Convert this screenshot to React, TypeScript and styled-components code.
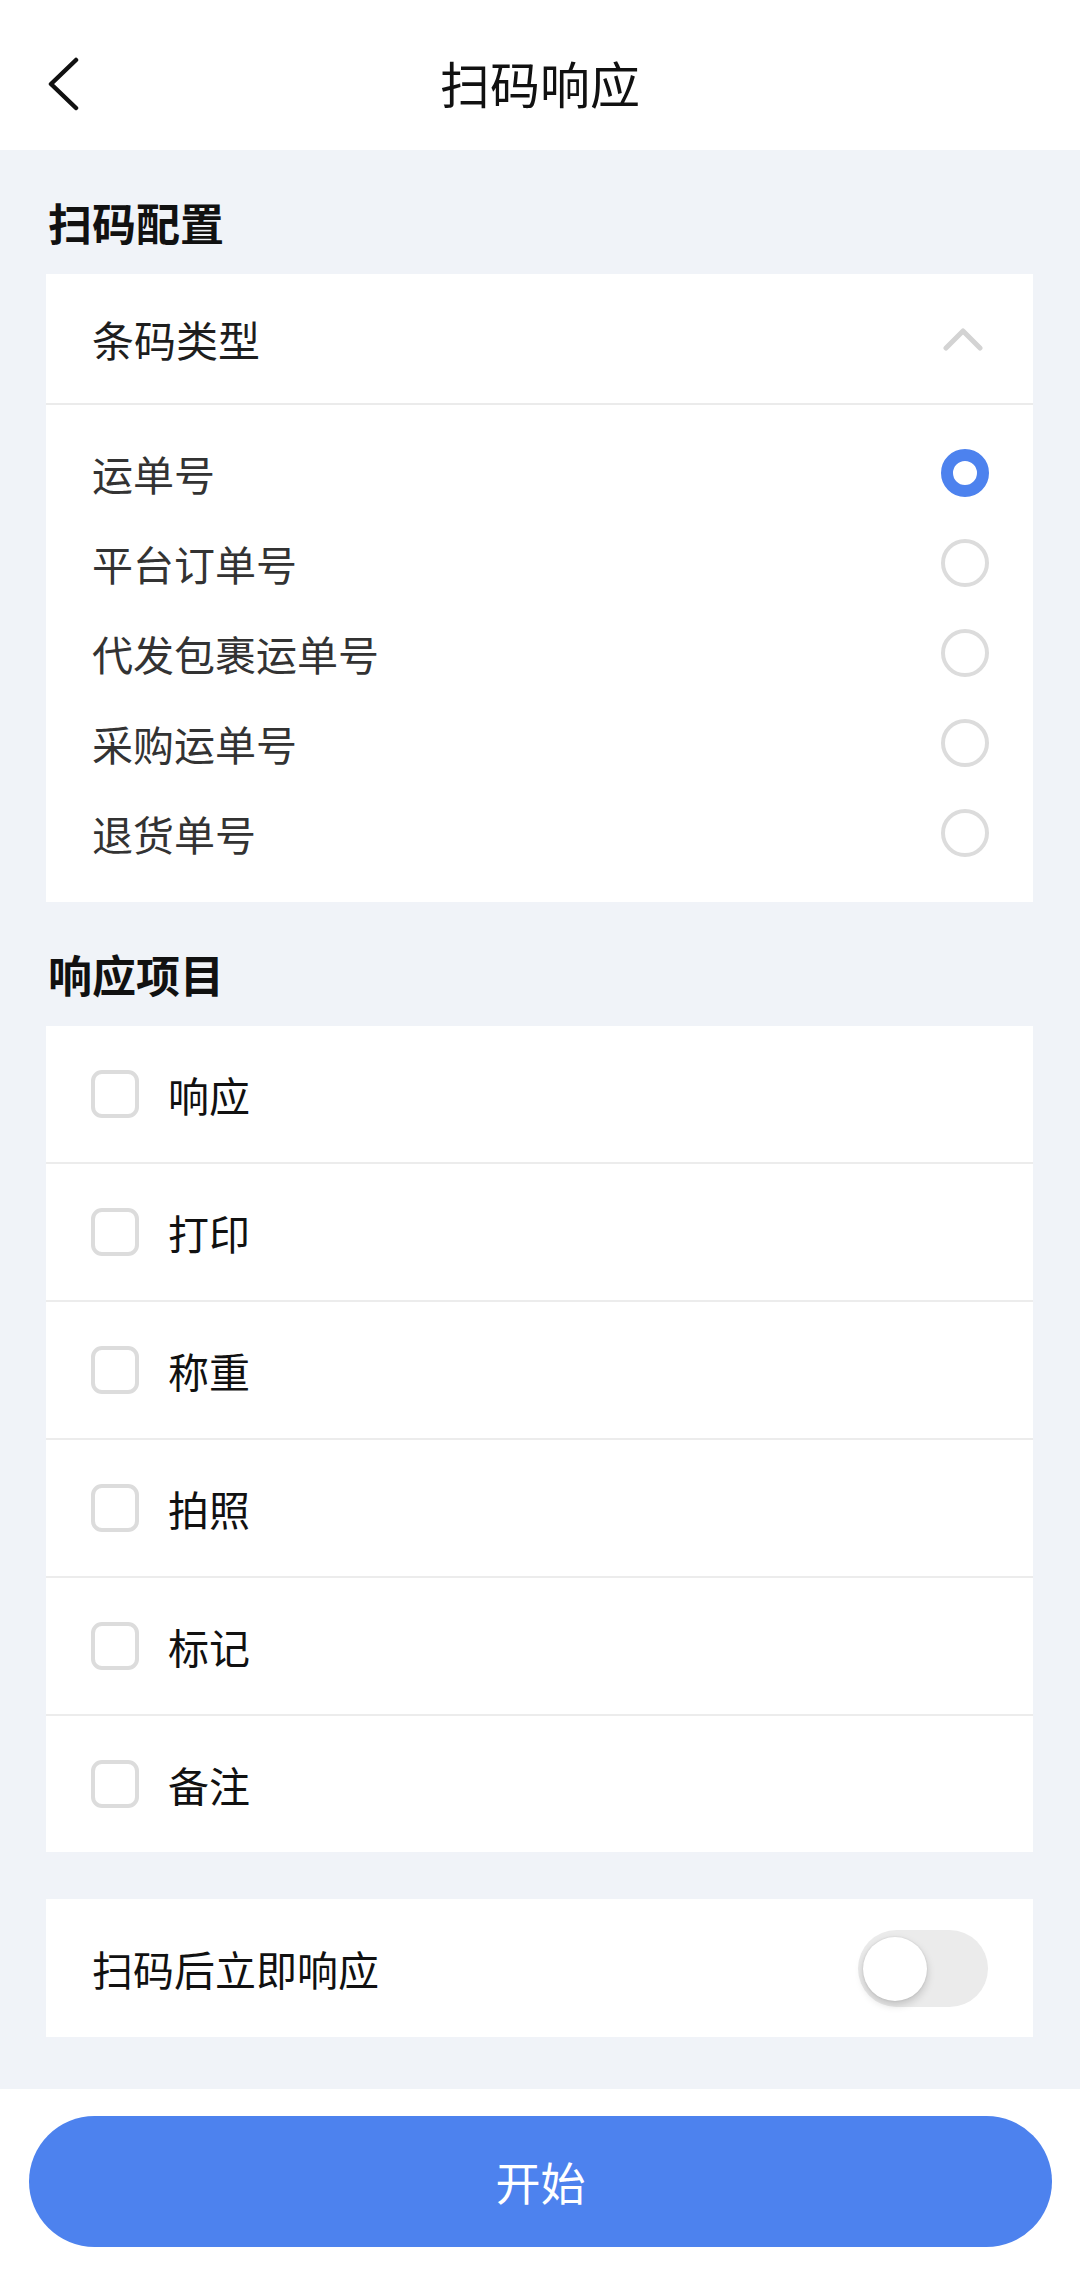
import React, { useState } from 'react';
import styled, { createGlobalStyle } from 'styled-components';

const GlobalStyle = createGlobalStyle`
  * { box-sizing: border-box; }
  html, body {
    margin: 0;
    padding: 0;
    background: #ffffff;
    font-family: "Noto Sans CJK SC", "Noto Sans", sans-serif;
  }
`;

const barcodeTypes = ['运单号', '平台订单号', '代发包裹运单号', '采购运单号', '退货单号'];
const responseItems = ['响应', '打印', '称重', '拍照', '标记', '备注'];

export default function App() {
  const [selected, setSelected] = useState(0);
  const [checked, setChecked] = useState<boolean[]>(responseItems.map(() => false));
  const [instant, setInstant] = useState(false);
  const [open, setOpen] = useState(true);

  const toggleItem = (i: number) => {
    const next = [...checked];
    next[i] = !next[i];
    setChecked(next);
  };

  return (
    <Page>
      <GlobalStyle />
      <Header>
        <BackButton aria-label="返回">
          <svg width="32" height="54" viewBox="0 0 32 54" fill="none">
            <path d="M29 3 L4 27 L29 51" stroke="#111" strokeWidth="4.5" strokeLinecap="round" strokeLinejoin="round" />
          </svg>
        </BackButton>
        <HeaderTitle>扫码响应</HeaderTitle>
      </Header>

      <Main>
        <SectionTitle>扫码配置</SectionTitle>
        <Card>
          <CollapseHeader onClick={() => setOpen(!open)}>
            <CollapseTitle>条码类型</CollapseTitle>
            <svg width="40" height="24" viewBox="0 0 40 24" fill="none" style={{ transform: open ? 'none' : 'rotate(180deg)' }}>
              <path d="M3 21 L20 4 L37 21" stroke="#d3d3d3" strokeWidth="5" strokeLinecap="round" strokeLinejoin="round" />
            </svg>
          </CollapseHeader>
          {open && (
            <OptionList>
              {barcodeTypes.map((t, i) => (
                <OptionRow key={t} onClick={() => setSelected(i)}>
                  <OptionText>{t}</OptionText>
                  <Radio $active={selected === i} />
                </OptionRow>
              ))}
            </OptionList>
          )}
        </Card>

        <SectionTitle>响应项目</SectionTitle>
        <Card>
          {responseItems.map((t, i) => (
            <CheckRow key={t} onClick={() => toggleItem(i)}>
              <CheckBox $checked={checked[i]}>
                {checked[i] && (
                  <svg width="28" height="28" viewBox="0 0 28 28" fill="none">
                    <path d="M5 14 L11 20 L23 8" stroke="#fff" strokeWidth="4" strokeLinecap="round" strokeLinejoin="round" />
                  </svg>
                )}
              </CheckBox>
              <CheckLabel>{t}</CheckLabel>
            </CheckRow>
          ))}
        </Card>

        <SwitchCard>
          <CheckLabel as="span" style={{ marginLeft: 0 }}>扫码后立即响应</CheckLabel>
          <SwitchTrack $on={instant} onClick={() => setInstant(!instant)}>
            <SwitchKnob $on={instant} />
          </SwitchTrack>
        </SwitchCard>
      </Main>

      <Footer>
        <StartButton>开始</StartButton>
      </Footer>
    </Page>
  );
}

const Page = styled.div`
  width: 1080px;
  min-height: 2281px;
  display: flex;
  flex-direction: column;
  background: #ffffff;
`;

const Header = styled.div`
  position: relative;
  height: 150px;
  display: flex;
  align-items: center;
  justify-content: center;
  background: #ffffff;
`;

const BackButton = styled.div`
  position: absolute;
  left: 47px;
  top: 57px;
  width: 32px;
  height: 54px;
  display: flex;
  cursor: pointer;
`;

const HeaderTitle = styled.h1`
  margin: 0;
  font-size: 50px;
  font-weight: 400;
  color: #111;
  line-height: 1;
  margin-top: 14px;
  letter-spacing: 0;
`;

const Main = styled.div`
  background: #f0f3f8;
  padding: 0 47px 52px 46px;
  display: flex;
  flex-direction: column;
`;

const SectionTitle = styled.div`
  height: 124px;
  padding-top: 20px;
  display: flex;
  align-items: center;
  font-size: 44px;
  font-weight: 700;
  color: #111;
  line-height: 1;
  padding-left: 2px;
`;

const Card = styled.div`
  background: #ffffff;
  display: flex;
  flex-direction: column;
`;

const CollapseHeader = styled.div`
  height: 131px;
  display: flex;
  align-items: center;
  justify-content: space-between;
  padding: 0 50px 0 46px;
  border-bottom: 2px solid #ebebeb;
  cursor: pointer;
`;

const CollapseTitle = styled.span`
  font-size: 42px;
  color: #1e1e1e;
  line-height: 1;
`;

const OptionList = styled.div`
  display: flex;
  flex-direction: column;
  padding: 23px 0 24px;
`;

const OptionRow = styled.div`
  height: 90px;
  display: flex;
  align-items: center;
  justify-content: space-between;
  padding: 0 44px 0 46px;
  cursor: pointer;
`;

const OptionText = styled.span`
  font-size: 41px;
  color: #333;
  line-height: 1;
`;

const Radio = styled.span<{ $active: boolean }>`
  width: 48px;
  height: 48px;
  border-radius: 50%;
  border: ${(p) => (p.$active ? '12px solid #4d82ee' : '4.5px solid #dcdcdc')};
  background: #ffffff;
  flex-shrink: 0;
`;

const CheckRow = styled.div`
  height: 138px;
  display: flex;
  align-items: center;
  padding: 0 46px 0 45px;
  border-bottom: 2px solid #ececec;
  cursor: pointer;
  &:last-child {
    height: 136px;
    border-bottom: none;
  }
`;

const CheckBox = styled.span<{ $checked: boolean }>`
  width: 48px;
  height: 48px;
  border-radius: 11px;
  border: 4.5px solid ${(p) => (p.$checked ? '#4d82ee' : '#dcdcdc')};
  background: ${(p) => (p.$checked ? '#4d82ee' : '#ffffff')};
  display: flex;
  align-items: center;
  justify-content: center;
  flex-shrink: 0;
`;

const CheckLabel = styled.span`
  margin-left: 29px;
  font-size: 41px;
  color: #111;
  line-height: 1;
`;

const SwitchCard = styled.div`
  margin-top: 47px;
  height: 138px;
  background: #ffffff;
  display: flex;
  align-items: center;
  justify-content: space-between;
  padding: 0 45px 0 46px;
`;

const SwitchTrack = styled.div<{ $on: boolean }>`
  position: relative;
  width: 130px;
  height: 77px;
  border-radius: 39px;
  background: ${(p) => (p.$on ? '#4d82ee' : '#ebebeb')};
  cursor: pointer;
  transition: background 0.2s;
`;

const SwitchKnob = styled.span<{ $on: boolean }>`
  position: absolute;
  top: 7px;
  left: ${(p) => (p.$on ? '61px' : '5px')};
  width: 64px;
  height: 64px;
  border-radius: 50%;
  background: #ffffff;
  box-shadow: 0 4px 8px rgba(0, 0, 0, 0.18), 0 0 2px rgba(0, 0, 0, 0.12);
  transition: left 0.2s;
`;

const Footer = styled.div`
  flex: 1;
  background: #ffffff;
  padding: 27px 28px 0 29px;
`;

const StartButton = styled.button`
  width: 100%;
  height: 131px;
  border: none;
  border-radius: 66px;
  background: #4d82ee;
  color: #ffffff;
  font-family: "Noto Sans CJK SC", "Noto Sans", sans-serif;
  font-size: 45px;
  font-weight: 400;
  cursor: pointer;
`;
